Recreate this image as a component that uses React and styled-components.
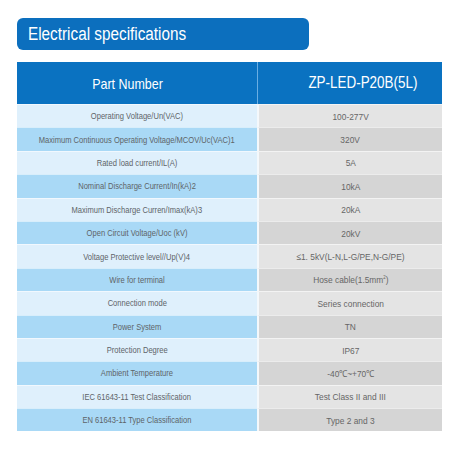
import React from "react";
import styled, { createGlobalStyle } from "styled-components";

const GlobalStyle = createGlobalStyle`
  html, body {
    margin: 0;
    padding: 0;
    background: #ffffff;
  }
  body {
    font-family: "Liberation Sans", Arial, sans-serif;
  }
`;

const Page = styled.div`
  width: 458px;
  height: 458px;
  padding: 18px 16px 0 17px;
  box-sizing: border-box;
  display: flex;
  flex-direction: column;
`;

const TitleBar = styled.div`
  width: 292px;
  height: 32px;
  background: #0c6fbe;
  border-radius: 6px;
  display: flex;
  align-items: center;
  padding-left: 11px;
  box-sizing: border-box;
  color: #ffffff;
  font-size: 18px;
`;

// the source uses a condensed face; squeeze the regular one
const Narrow = styled.span`
  display: inline-block;
  white-space: nowrap;
  transform: scaleX(${(p) => p.$scale || 0.85});
  transform-origin: ${(p) => (p.$left ? "left center" : "center")};
`;

const Table = styled.div`
  margin-top: 12px;
  width: 425px;
  display: grid;
  grid-template-columns: 240px 185px;
`;

const HeadCell = styled.div`
  height: 42px;
  background: #0a72c1;
  color: #ffffff;
  display: flex;
  align-items: center;
  justify-content: center;
  font-size: ${(p) => (p.$value ? "16px" : "15px")};
  padding-left: ${(p) => (p.$value ? "26px" : "0")};
  padding-right: ${(p) => (p.$value ? "0" : "18px")};
  border-left: ${(p) => (p.$value ? "1px solid #6aaee3" : "none")};
  box-sizing: border-box;
`;

const LabelCell = styled.div`
  height: 23.4px;
  background: ${(p) => (p.$dark ? "#a9d9f6" : "#dff0fc")};
  color: #5e6468;
  font-size: 9px;
  display: flex;
  align-items: center;
  justify-content: center;
  border-top: 1px solid rgba(255, 255, 255, 0.55);
  box-sizing: border-box;
  white-space: nowrap;
`;

const ValueCell = styled.div`
  height: 23.4px;
  background: ${(p) => (p.$dark ? "#d5d5d5" : "#e4e4e4")};
  color: #666666;
  font-size: 9.5px;
  display: flex;
  align-items: center;
  justify-content: center;
  border-left: 2px solid #f4f8fb;
  border-top: 1px solid rgba(255, 255, 255, 0.55);
  box-sizing: border-box;
  white-space: nowrap;
`;

const Sup = styled.sup`
  font-size: 5px;
`;

const specs = [
  ["Operating Voltage/Un(VAC)", "100-277V"],
  ["Maximum Continuous Operating Voltage/MCOV/Uc(VAC)1", "320V"],
  ["Rated load current/IL(A)", "5A"],
  ["Nominal Discharge Current/In(kA)2", "10kA"],
  ["Maximum Discharge Curren/Imax(kA)3", "20kA"],
  ["Open Circuit Voltage/Uoc (kV)", "20kV"],
  ["Voltage Protective level//Up(V)4", "≤1. 5kV(L-N,L-G/PE,N-G/PE)"],
  ["Wire for terminal", <>Hose cable(1.5mm<Sup>2</Sup>)</>],
  ["Connection mode", "Series connection"],
  ["Power  System", "TN"],
  ["Protection Degree", "IP67"],
  ["Ambient Temperature", "-40℃~+70℃"],
  ["IEC 61643-11 Test Classification", "Test Class II and III"],
  ["EN 61643-11 Type Classification", "Type 2 and 3"],
];

export default function App() {
  return (
    <>
      <GlobalStyle />
      <Page>
        <TitleBar>
          <Narrow $left $scale={0.85}>Electrical specifications</Narrow>
        </TitleBar>
        <Table>
          <HeadCell>
            <Narrow $scale={0.83}>Part Number</Narrow>
          </HeadCell>
          <HeadCell $value>
            <Narrow $scale={0.84}>ZP-LED-P20B(5L)</Narrow>
          </HeadCell>
          {specs.map(([label, value], i) => (
            <React.Fragment key={label}>
              <LabelCell $dark={i % 2 === 1}>
                <Narrow $scale={0.84}>{label}</Narrow>
              </LabelCell>
              <ValueCell $dark={i % 2 === 1}>
                <Narrow $scale={0.88}>{value}</Narrow>
              </ValueCell>
            </React.Fragment>
          ))}
        </Table>
      </Page>
    </>
  );
}
